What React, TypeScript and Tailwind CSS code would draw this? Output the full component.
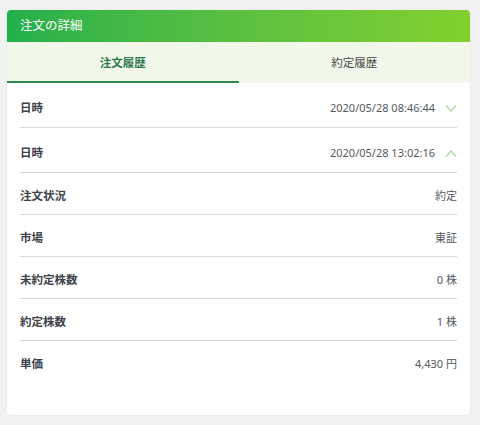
import React from "react";

const font = { fontFamily: '"Segoe UI", "Noto Sans", "Noto Sans CJK JP", sans-serif' };

function Chevron({ up }: { up?: boolean }) {
  return (
    <svg width="12" height="7" viewBox="0 0 12 7" className="ml-[10px]">
      <path
        d={up ? "M1 6.5 L6 1 L11 6.5" : "M1 0.5 L6 6 L11 0.5"}
        fill="none"
        stroke="#a8d89a"
        strokeWidth="1.2"
      />
    </svg>
  );
}

function Row({ label, value, chevron, tall, last }: { label: string; value: string; chevron?: "up" | "down"; tall?: boolean; last?: boolean }) {
  return (
    <div
      className={`flex items-center justify-between leading-[18px] ${tall ? "pt-4 pb-[10px]" : "pt-[14px] pb-[9px]"} ${last ? "" : "border-b border-[#d9d9d9]"}`}
    >
      <span className="text-[11.5px] font-bold text-[#3d434b]">{label}</span>
      <span className="flex items-center text-[11px] text-[#555a60]">
        {value}
        {chevron && <Chevron up={chevron === "up"} />}
      </span>
    </div>
  );
}

export default function App() {
  return (
    <div className="w-[480px] h-[425px] bg-[#f2f2f2] pt-[10px] px-[7px]" style={font}>
      <div className="w-[463px] h-[405px] bg-white rounded-[4px] shadow-[0_0_2px_rgba(0,0,0,0.08)] overflow-hidden">
        <div className="h-[32px] flex items-center px-[13px] bg-gradient-to-r from-[#21b04b] to-[#82d02e] text-white text-[12.5px]">
          注文の詳細
        </div>
        <div className="flex h-[41px] bg-[#f1f8ea]">
          <div className="flex-1 flex items-center justify-center border-b-2 border-[#2f8a52] text-[11.5px] font-bold text-[#2e7a4e] pt-[2px]">
            注文履歴
          </div>
          <div className="flex-1 flex items-center justify-center text-[11.5px] text-[#4a4a4a]">
            約定履歴
          </div>
        </div>
        <div className="px-[13px]">
          <Row label="日時" value="2020/05/28 08:46:44" chevron="down" tall />
          <Row label="日時" value="2020/05/28 13:02:16" chevron="up" tall />
          <Row label="注文状況" value="約定" />
          <Row label="市場" value="東証" />
          <Row label="未約定株数" value="0 株" />
          <Row label="約定株数" value="1 株" />
          <Row label="単価" value="4,430 円" last />
        </div>
      </div>
    </div>
  );
}
